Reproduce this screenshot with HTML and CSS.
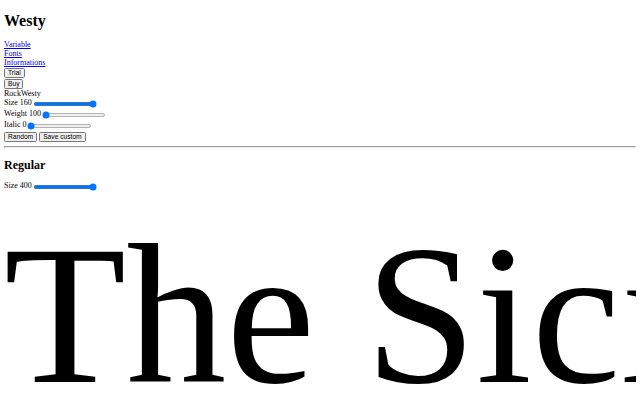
FILE: index.html
```html
<!DOCTYPE html>
<html lang="en" class="page">
<head>
<meta charset="utf-8">
<title>Westy</title>
<link rel="stylesheet" href="styles.css">
</head>
<body class="body">
<header class="header">
  <h1 class="title">Westy</h1>
  <nav class="nav">
    <a class="nav-link" href="#variable">Variable</a>
    <a class="nav-link" href="#fonts">Fonts</a>
    <a class="nav-link" href="#informations">Informations</a>
  </nav>
  <div class="row"><button class="btn" type="button">Trial</button></div>
  <div class="row"><button class="btn" type="button">Buy</button></div>
</header>
<section class="variable">
  <div class="row">RockWesty</div>
  <div class="row"><label class="control">Size 160<input class="slider" type="range" min="10" max="160" value="160"></label></div>
  <div class="row"><label class="control">Weight 100<input class="slider" type="range" min="100" max="900" value="100"></label></div>
  <div class="row"><label class="control">Italic 0<input class="slider" type="range" min="0" max="1" step="0.01" value="0"></label></div>
  <div class="row"><button class="btn" type="button">Random</button> <button class="btn" type="button">Save custom</button></div>
</section>
<hr class="rule">
<section class="style">
  <h2 class="style-title">Regular</h2>
  <div class="row"><label class="control">Size 400<input class="slider" type="range" min="10" max="400" value="400"></label></div>
  <div class="sample">The Sicilian Defence</div>
</section>
</body>
</html>
```
FILE: styles.css
```css
.page {
  zoom: 0.5;
}
.body {
  margin: 8px;
  font-family: "Liberation Serif", "Times New Roman", serif;
  font-size: 16px;
  color: #000;
  background: #fff;
}
.title {
  font-size: 32px;
  margin: 15px 0 21px;
}
.nav-link {
  display: block;
  color: #0000ee;
}
.btn {
  font-family: "Liberation Sans", Arial, sans-serif;
  font-size: 13.33px;
  margin: 1px 0;
}
.slider {
  vertical-align: middle;
  margin: 3px 2px;
}
.rule {
  margin: 8px 0;
}
.style-title {
  font-size: 24px;
  margin: 20px 0 16px;
}
.sample {
  margin-top: 16px;
  font-size: 400px;
  white-space: nowrap;
}
```
